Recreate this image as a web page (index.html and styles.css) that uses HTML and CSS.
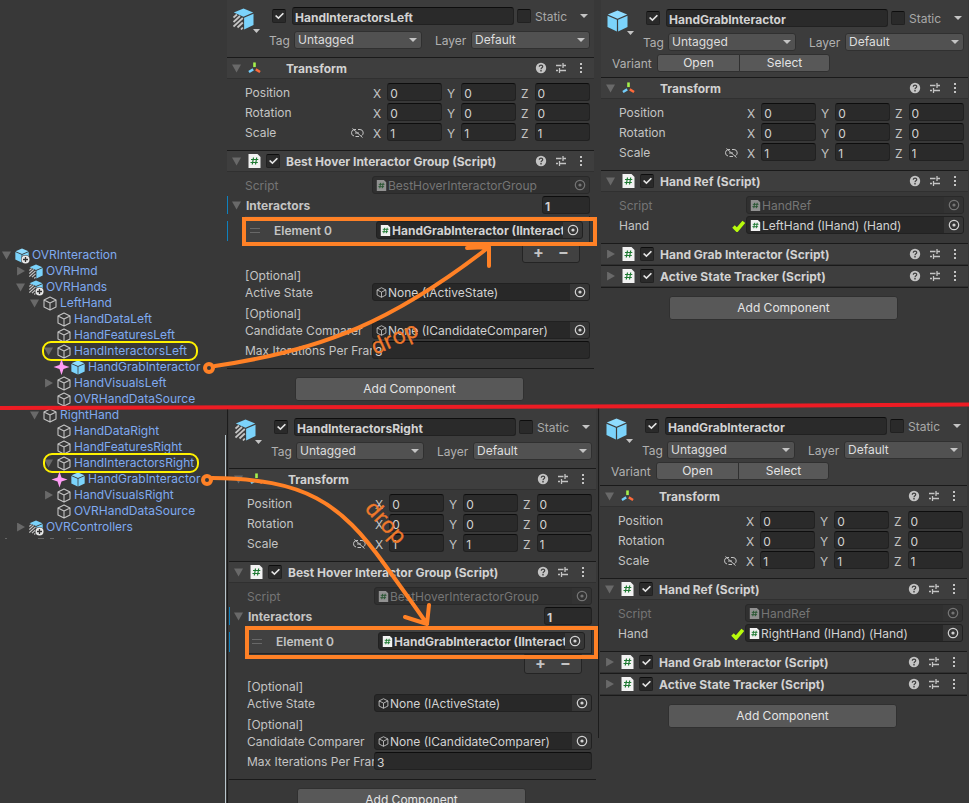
FILE: index.html
```html
<!DOCTYPE html>
<html lang="en">
<head>
<meta charset="utf-8">
<title>Interactor setup</title>
<link rel="stylesheet" href="styles.css">
</head>
<body>
<svg class="defs" aria-hidden="true">
  <symbol id="cube" viewBox="0 0 21 22"><path d="M10.500 0.500 20.200 4.500 10.500 8.700 0.800 4.500z" fill="#8fdcff"/><path d="M0.500 5.700 9.900 9.700V21.500L0.500 17z" fill="#7bd3fb"/><path d="M20.500 5.700 11.100 9.700V21.500L20.500 17z" fill="#7bd3fb"/></symbol>
  <symbol id="cube-variant" viewBox="0 0 21 22"><path d="M10.500 0.500 20.200 4.500 10.500 8.700 0.800 4.500z" fill="#7bd3fb"/><path d="M20.500 5.700 11.100 9.700V21.500L20.500 17z" fill="#7bd3fb"/><path d="M0.500 9.500 4 6.500M0.500 14 7 8M0.500 18.500 9.800 10M4.500 19.500 9.800 14.500M8 21.500 9.800 19.500" stroke="#c4c4c4" stroke-width="1.800"/></symbol>
  <symbol id="cube-line" viewBox="0 0 14 15"><path d="M7 1 13 4V11L7 14 1 11V4zM1 4 7 7 13 4M7 7V14" fill="none" stroke="currentColor" stroke-width="1.100" stroke-linejoin="round"/></symbol>
  <symbol id="script" viewBox="0 0 12 14"><path d="M0 0H9L12 3V14H0z" fill="#f2f2f2"/><path d="M5 3.500 3.800 10.500M8.200 3.500 7 10.500M2.500 5.500H9.800M2 8.500H9.300" stroke="#1f7a33" stroke-width="1.200"/></symbol>
  <symbol id="axes" viewBox="0 0 14 14"><path d="M7 1V6" stroke="#a4f04c" stroke-width="2.800"/><path d="M5.600 8.500 1 11.300" stroke="#73cdfa" stroke-width="2.600"/><path d="M8.400 8.500 13 11.300" stroke="#ff6a3a" stroke-width="2.600"/></symbol>
  <symbol id="help" viewBox="0 0 12 12"><circle cx="6" cy="6" r="5.200" fill="#c4c4c4"/><path d="M4.300 4.800C4.300 2.600 7.800 2.700 7.700 4.700 7.700 5.800 6 5.900 6 7.200" fill="none" stroke="#3e3e3e" stroke-width="1.200"/><path d="M6 8V9.400" stroke="#3e3e3e" stroke-width="1.400"/></symbol>
  <symbol id="sliders" viewBox="0 0 12 12"><path d="M1 3.500H6.500M8 3.500H11M8 1V6M1 8.500H3M5 8.500H11M4.500 6V11" stroke="#c4c4c4" stroke-width="1.300"/></symbol>
  <symbol id="dots" viewBox="0 0 12 12"><path d="M5 1H7V3H5zM5 5H7V7H5zM5 9H7V11H5z" fill="#c4c4c4"/></symbol>
  <symbol id="target" viewBox="0 0 12 12"><circle cx="6" cy="6" r="4.700" fill="none" stroke="currentColor" stroke-width="1.200"/><circle cx="6" cy="6" r="1.600" fill="currentColor"/></symbol>
  <symbol id="unlink" viewBox="0 0 13 10"><path d="M5 1.500H4a3.300 3.300 0 0 0-1 6.500M7 1.500H9a3.300 3.300 0 0 1 1.500 6.200M4.500 8.500H8M4 5H8M1.500 .5 11.500 9.500" fill="none" stroke="#c4c4c4"/></symbol>
  <symbol id="plus-badge" viewBox="0 0 9 9"><circle cx="4.500" cy="4.500" r="4.500" fill="#383838"/><circle cx="4.500" cy="4.500" r="4" fill="#e8e8e8"/><path d="M4.500 2V7M2 4.500H7" stroke="#333" stroke-width="1.300"/></symbol>
  <symbol id="tick" viewBox="0 0 13 12"><path d="M1.500 6.500 5 10 11.800 1.800" fill="none" stroke="#b8fb0c" stroke-width="3.600"/></symbol>
</svg>

<div class="board">
  <nav class="tree" aria-label="Hierarchy">
    <ul>
      <li class="d0"><i class="fold open"></i><span class="ico"><svg><use href="#cube"/></svg><svg class="badge"><use href="#plus-badge"/></svg></span>OVRInteraction</li>
      <li class="d1"><i class="fold"></i><span class="ico"><svg><use href="#cube-variant"/></svg></span>OVRHmd</li>
      <li class="d1"><i class="fold open"></i><span class="ico"><svg><use href="#cube-variant"/></svg><svg class="badge"><use href="#plus-badge"/></svg></span>OVRHands</li>
      <li class="d2"><i class="fold open"></i><span class="ico"><svg><use href="#cube-line"/></svg></span>LeftHand</li>
      <li class="d3"><i class="fold none"></i><span class="ico"><svg><use href="#cube-line"/></svg></span>HandDataLeft</li>
      <li class="d3"><i class="fold none"></i><span class="ico"><svg><use href="#cube-line"/></svg></span>HandFeaturesLeft</li>
      <li class="d3"><i class="fold open"></i><span class="ico"><svg><use href="#cube-line"/></svg></span>HandInteractorsLeft</li>
      <li class="d4"><i class="fold none"></i><span class="ico"><svg><use href="#cube"/></svg></span>HandGrabInteractor</li>
      <li class="d3"><i class="fold"></i><span class="ico"><svg><use href="#cube-line"/></svg></span>HandVisualsLeft</li>
      <li class="d3"><i class="fold none"></i><span class="ico"><svg><use href="#cube-line"/></svg></span>OVRHandDataSource</li>
      <li class="d2"><i class="fold open"></i><span class="ico"><svg><use href="#cube-line"/></svg></span>RightHand</li>
      <li class="d3"><i class="fold none"></i><span class="ico"><svg><use href="#cube-line"/></svg></span>HandDataRight</li>
      <li class="d3"><i class="fold none"></i><span class="ico"><svg><use href="#cube-line"/></svg></span>HandFeaturesRight</li>
      <li class="d3"><i class="fold open"></i><span class="ico"><svg><use href="#cube-line"/></svg></span>HandInteractorsRight</li>
      <li class="d4"><i class="fold none"></i><span class="ico"><svg><use href="#cube"/></svg></span>HandGrabInteractor</li>
      <li class="d3"><i class="fold"></i><span class="ico"><svg><use href="#cube-line"/></svg></span>HandVisualsRight</li>
      <li class="d3"><i class="fold none"></i><span class="ico"><svg><use href="#cube-line"/></svg></span>OVRHandDataSource</li>
      <li class="d1"><i class="fold"></i><span class="ico"><svg><use href="#cube-variant"/></svg><svg class="badge"><use href="#plus-badge"/></svg></span>OVRControllers</li>
    </ul>
  </nav>

  <main class="inspectors">
    <div class="pair pair-left-hand">
      <section class="inspector group">
        <header class="object">
          <span class="object-icon"><svg><use href="#cube-variant"/></svg><i class="caret"></i></span>
          <div class="name-row"><input type="checkbox" checked aria-label="Active"><input class="name" type="text" value="HandInteractorsLeft" aria-label="Name"><label class="static"><input type="checkbox"><span>Static</span><i class="caret"></i></label></div>
          <div class="tag-row"><label for="tag1">Tag</label><span class="drop tag"><select id="tag1"><option>Untagged</option></select></span><label class="layer-label" for="layer1">Layer</label><span class="drop layer"><select id="layer1"><option>Default</option></select></span></div>
        </header>
        <section class="component">
          <h2><i class="fold open"></i><svg class="type"><use href="#axes"/></svg><span class="title">Transform</span><svg class="act"><use href="#help"/></svg><svg class="act"><use href="#sliders"/></svg><svg class="act"><use href="#dots"/></svg></h2>
          <div class="body">
            <div class="row"><span class="label">Position</span><div class="xyz"><label>X<input type="text" value="0"></label><label>Y<input type="text" value="0"></label><label>Z<input type="text" value="0"></label></div></div>
            <div class="row"><span class="label">Rotation</span><div class="xyz"><label>X<input type="text" value="0"></label><label>Y<input type="text" value="0"></label><label>Z<input type="text" value="0"></label></div></div>
            <div class="row"><span class="label">Scale<svg class="unlink"><use href="#unlink"/></svg></span><div class="xyz"><label>X<input type="text" value="1"></label><label>Y<input type="text" value="1"></label><label>Z<input type="text" value="1"></label></div></div>
          </div>
        </section>
        <section class="component">
          <h2><i class="fold open"></i><svg class="type"><use href="#script"/></svg><input type="checkbox" checked aria-label="Best Hover Interactor Group enabled"><span class="title">Best Hover Interactor Group (Script)</span><svg class="act"><use href="#help"/></svg><svg class="act"><use href="#sliders"/></svg><svg class="act"><use href="#dots"/></svg></h2>
          <div class="body">
            <div class="row disabled"><span class="label">Script</span><div class="ref"><svg class="mini"><use href="#script"/></svg><span>BestHoverInteractorGroup</span><button type="button" disabled aria-label="Pick script"><svg><use href="#target"/></svg></button></div></div>
            <div class="row array"><i class="fold open"></i><label class="label" for="size1">Interactors</label><input id="size1" class="size" type="text" value="1"></div>
            <div class="list">
              <div class="item"><i class="grip"></i><span class="item-label">Element 0</span><div class="ref"><svg class="mini"><use href="#script"/></svg><span>HandGrabInteractor (IInteractor)</span><button type="button" aria-label="Pick element"><svg><use href="#target"/></svg></button></div></div>
              <div class="list-tools"><button type="button">+</button><button type="button">−</button></div>
            </div>
            <div class="row note">[Optional]</div>
            <div class="row"><span class="label">Active State</span><div class="ref"><svg class="mini"><use href="#cube-line"/></svg><span>None (IActiveState)</span><button type="button" aria-label="Pick active state"><svg><use href="#target"/></svg></button></div></div>
            <div class="row note">[Optional]</div>
            <div class="row"><span class="label">Candidate Comparer</span><div class="ref"><svg class="mini"><use href="#cube-line"/></svg><span>None (ICandidateComparer)</span><button type="button" aria-label="Pick comparer"><svg><use href="#target"/></svg></button></div></div>
            <div class="row"><label class="label" for="iter1">Max Iterations Per Frame</label><input id="iter1" class="wide" type="text" value="3"></div>
          </div>
        </section>
        <footer><button type="button" class="add">Add Component</button></footer>
      </section>

      <section class="inspector grab">
        <header class="object">
          <span class="object-icon"><svg><use href="#cube"/></svg><i class="caret"></i></span>
          <div class="name-row"><input type="checkbox" checked aria-label="Active"><input class="name" type="text" value="HandGrabInteractor" aria-label="Name"><label class="static"><input type="checkbox"><span>Static</span><i class="caret"></i></label></div>
          <div class="tag-row"><label for="tag2">Tag</label><span class="drop tag"><select id="tag2"><option>Untagged</option></select></span><label class="layer-label" for="layer2">Layer</label><span class="drop layer"><select id="layer2"><option>Default</option></select></span></div>
          <div class="variant-row"><span>Variant</span><button type="button">Open</button><button type="button">Select</button></div>
        </header>
        <section class="component">
          <h2><i class="fold open"></i><svg class="type"><use href="#axes"/></svg><span class="title">Transform</span><svg class="act"><use href="#help"/></svg><svg class="act"><use href="#sliders"/></svg><svg class="act"><use href="#dots"/></svg></h2>
          <div class="body">
            <div class="row"><span class="label">Position</span><div class="xyz"><label>X<input type="text" value="0"></label><label>Y<input type="text" value="0"></label><label>Z<input type="text" value="0"></label></div></div>
            <div class="row"><span class="label">Rotation</span><div class="xyz"><label>X<input type="text" value="0"></label><label>Y<input type="text" value="0"></label><label>Z<input type="text" value="0"></label></div></div>
            <div class="row"><span class="label">Scale<svg class="unlink"><use href="#unlink"/></svg></span><div class="xyz"><label>X<input type="text" value="1"></label><label>Y<input type="text" value="1"></label><label>Z<input type="text" value="1"></label></div></div>
          </div>
        </section>
        <section class="component">
          <h2><i class="fold open"></i><svg class="type"><use href="#script"/></svg><input type="checkbox" checked aria-label="Hand Ref enabled"><span class="title">Hand Ref (Script)</span><svg class="act"><use href="#help"/></svg><svg class="act"><use href="#sliders"/></svg><svg class="act"><use href="#dots"/></svg></h2>
          <div class="body">
            <div class="row disabled"><span class="label">Script</span><div class="ref"><svg class="mini"><use href="#script"/></svg><span>HandRef</span><button type="button" disabled aria-label="Pick script"><svg><use href="#target"/></svg></button></div></div>
            <div class="row"><span class="label">Hand<svg class="tick"><use href="#tick"/></svg></span><div class="ref"><svg class="mini"><use href="#script"/></svg><span>LeftHand (IHand) (Hand)</span><button type="button" aria-label="Pick hand"><svg><use href="#target"/></svg></button></div></div>
          </div>
        </section>
        <section class="component">
          <h2><i class="fold"></i><svg class="type"><use href="#script"/></svg><input type="checkbox" checked aria-label="Hand Grab Interactor enabled"><span class="title">Hand Grab Interactor (Script)</span><svg class="act"><use href="#help"/></svg><svg class="act"><use href="#sliders"/></svg><svg class="act"><use href="#dots"/></svg></h2>
        </section>
        <section class="component">
          <h2><i class="fold"></i><svg class="type"><use href="#script"/></svg><input type="checkbox" checked aria-label="Active State Tracker enabled"><span class="title">Active State Tracker (Script)</span><svg class="act"><use href="#help"/></svg><svg class="act"><use href="#sliders"/></svg><svg class="act"><use href="#dots"/></svg></h2>
        </section>
        <footer><button type="button" class="add">Add Component</button></footer>
      </section>
    </div>

    <div class="pair pair-right-hand">
      <section class="inspector group">
        <header class="object">
          <span class="object-icon"><svg><use href="#cube-variant"/></svg><i class="caret"></i></span>
          <div class="name-row"><input type="checkbox" checked aria-label="Active"><input class="name" type="text" value="HandInteractorsRight" aria-label="Name"><label class="static"><input type="checkbox"><span>Static</span><i class="caret"></i></label></div>
          <div class="tag-row"><label for="tag3">Tag</label><span class="drop tag"><select id="tag3"><option>Untagged</option></select></span><label class="layer-label" for="layer3">Layer</label><span class="drop layer"><select id="layer3"><option>Default</option></select></span></div>
        </header>
        <section class="component">
          <h2><i class="fold open"></i><svg class="type"><use href="#axes"/></svg><span class="title">Transform</span><svg class="act"><use href="#help"/></svg><svg class="act"><use href="#sliders"/></svg><svg class="act"><use href="#dots"/></svg></h2>
          <div class="body">
            <div class="row"><span class="label">Position</span><div class="xyz"><label>X<input type="text" value="0"></label><label>Y<input type="text" value="0"></label><label>Z<input type="text" value="0"></label></div></div>
            <div class="row"><span class="label">Rotation</span><div class="xyz"><label>X<input type="text" value="0"></label><label>Y<input type="text" value="0"></label><label>Z<input type="text" value="0"></label></div></div>
            <div class="row"><span class="label">Scale<svg class="unlink"><use href="#unlink"/></svg></span><div class="xyz"><label>X<input type="text" value="1"></label><label>Y<input type="text" value="1"></label><label>Z<input type="text" value="1"></label></div></div>
          </div>
        </section>
        <section class="component">
          <h2><i class="fold open"></i><svg class="type"><use href="#script"/></svg><input type="checkbox" checked aria-label="Best Hover Interactor Group enabled"><span class="title">Best Hover Interactor Group (Script)</span><svg class="act"><use href="#help"/></svg><svg class="act"><use href="#sliders"/></svg><svg class="act"><use href="#dots"/></svg></h2>
          <div class="body">
            <div class="row disabled"><span class="label">Script</span><div class="ref"><svg class="mini"><use href="#script"/></svg><span>BestHoverInteractorGroup</span><button type="button" disabled aria-label="Pick script"><svg><use href="#target"/></svg></button></div></div>
            <div class="row array"><i class="fold open"></i><label class="label" for="size2">Interactors</label><input id="size2" class="size" type="text" value="1"></div>
            <div class="list">
              <div class="item"><i class="grip"></i><span class="item-label">Element 0</span><div class="ref"><svg class="mini"><use href="#script"/></svg><span>HandGrabInteractor (IInteractor)</span><button type="button" aria-label="Pick element"><svg><use href="#target"/></svg></button></div></div>
              <div class="list-tools"><button type="button">+</button><button type="button">−</button></div>
            </div>
            <div class="row note">[Optional]</div>
            <div class="row"><span class="label">Active State</span><div class="ref"><svg class="mini"><use href="#cube-line"/></svg><span>None (IActiveState)</span><button type="button" aria-label="Pick active state"><svg><use href="#target"/></svg></button></div></div>
            <div class="row note">[Optional]</div>
            <div class="row"><span class="label">Candidate Comparer</span><div class="ref"><svg class="mini"><use href="#cube-line"/></svg><span>None (ICandidateComparer)</span><button type="button" aria-label="Pick comparer"><svg><use href="#target"/></svg></button></div></div>
            <div class="row"><label class="label" for="iter2">Max Iterations Per Frame</label><input id="iter2" class="wide" type="text" value="3"></div>
          </div>
        </section>
        <footer><button type="button" class="add">Add Component</button></footer>
      </section>

      <section class="inspector grab">
        <header class="object">
          <span class="object-icon"><svg><use href="#cube"/></svg><i class="caret"></i></span>
          <div class="name-row"><input type="checkbox" checked aria-label="Active"><input class="name" type="text" value="HandGrabInteractor" aria-label="Name"><label class="static"><input type="checkbox"><span>Static</span><i class="caret"></i></label></div>
          <div class="tag-row"><label for="tag4">Tag</label><span class="drop tag"><select id="tag4"><option>Untagged</option></select></span><label class="layer-label" for="layer4">Layer</label><span class="drop layer"><select id="layer4"><option>Default</option></select></span></div>
          <div class="variant-row"><span>Variant</span><button type="button">Open</button><button type="button">Select</button></div>
        </header>
        <section class="component">
          <h2><i class="fold open"></i><svg class="type"><use href="#axes"/></svg><span class="title">Transform</span><svg class="act"><use href="#help"/></svg><svg class="act"><use href="#sliders"/></svg><svg class="act"><use href="#dots"/></svg></h2>
          <div class="body">
            <div class="row"><span class="label">Position</span><div class="xyz"><label>X<input type="text" value="0"></label><label>Y<input type="text" value="0"></label><label>Z<input type="text" value="0"></label></div></div>
            <div class="row"><span class="label">Rotation</span><div class="xyz"><label>X<input type="text" value="0"></label><label>Y<input type="text" value="0"></label><label>Z<input type="text" value="0"></label></div></div>
            <div class="row"><span class="label">Scale<svg class="unlink"><use href="#unlink"/></svg></span><div class="xyz"><label>X<input type="text" value="1"></label><label>Y<input type="text" value="1"></label><label>Z<input type="text" value="1"></label></div></div>
          </div>
        </section>
        <section class="component">
          <h2><i class="fold open"></i><svg class="type"><use href="#script"/></svg><input type="checkbox" checked aria-label="Hand Ref enabled"><span class="title">Hand Ref (Script)</span><svg class="act"><use href="#help"/></svg><svg class="act"><use href="#sliders"/></svg><svg class="act"><use href="#dots"/></svg></h2>
          <div class="body">
            <div class="row disabled"><span class="label">Script</span><div class="ref"><svg class="mini"><use href="#script"/></svg><span>HandRef</span><button type="button" disabled aria-label="Pick script"><svg><use href="#target"/></svg></button></div></div>
            <div class="row"><span class="label">Hand<svg class="tick"><use href="#tick"/></svg></span><div class="ref"><svg class="mini"><use href="#script"/></svg><span>RightHand (IHand) (Hand)</span><button type="button" aria-label="Pick hand"><svg><use href="#target"/></svg></button></div></div>
          </div>
        </section>
        <section class="component">
          <h2><i class="fold"></i><svg class="type"><use href="#script"/></svg><input type="checkbox" checked aria-label="Hand Grab Interactor enabled"><span class="title">Hand Grab Interactor (Script)</span><svg class="act"><use href="#help"/></svg><svg class="act"><use href="#sliders"/></svg><svg class="act"><use href="#dots"/></svg></h2>
        </section>
        <section class="component">
          <h2><i class="fold"></i><svg class="type"><use href="#script"/></svg><input type="checkbox" checked aria-label="Active State Tracker enabled"><span class="title">Active State Tracker (Script)</span><svg class="act"><use href="#help"/></svg><svg class="act"><use href="#sliders"/></svg><svg class="act"><use href="#dots"/></svg></h2>
        </section>
        <footer><button type="button" class="add">Add Component</button></footer>
      </section>
    </div>
  </main>

  <!-- Hand-drawn notes laid over the panels -->
  <svg class="notes" viewBox="0 0 969 803" width="969" height="803">
    <path d="M225.500 435V803" stroke="#b9c6cc"/>
    <path d="M227.500 409V803M598.500 408V738" stroke="#1c1c1c"/>
    <path d="M5 538.500H7M38 538.500H44M50 538.500H54M68 538.500H71M76 538.500H83" stroke="#666"/>
    <path d="M0 408 400 407 720 406 969 404.500" fill="none" stroke="#ed1c24" stroke-width="4"/>
    <g fill="none" stroke="#fff200" stroke-width="2">
      <rect x="43" y="342" width="154" height="18" rx="8"/>
      <rect x="44" y="454" width="154" height="18" rx="8"/>
    </g>
    <g fill="#ff9cf5">
      <path d="M61.500 359 63.500 365 69.500 367 63.500 369 61.500 375 59.500 369 53.500 367 59.500 365z"/>
      <path d="M59.500 471.500 61.500 477.500 67.500 479.500 61.500 481.500 59.500 487.500 57.500 481.500 51.500 479.500 57.500 477.500z"/>
    </g>
    <g fill="none" stroke="#ff8126" stroke-width="4" stroke-linejoin="round" stroke-linecap="round">
      <circle cx="209" cy="368" r="4"/>
      <path d="M215 366C325 350 395 320 489 247M467 248 489 247 489 266"/>
      <circle cx="207" cy="480" r="4"/>
      <path d="M212 478C305 479 340 502 385 565 400 586 412 602 427 624M405 617 427 624 429 605"/>
    </g>
    <g fill="none" stroke="#ff8126" stroke-width="4">
      <rect x="244" y="219" width="351" height="25"/>
      <rect x="247" y="628" width="349" height="29"/>
    </g>
    <g class="drop-note">
      <text transform="translate(375 355) rotate(-24)">drop</text>
      <text transform="translate(364 509) rotate(48)">drop</text>
    </g>
  </svg>
</div>
</body>
</html>
```
FILE: styles.css
```css
* { box-sizing: border-box; }
body {
  margin: 0;
  background: #383838;
  color: #c4c4c4;
  font: 12px/16px Inter, "Liberation Sans", sans-serif;
}
input, select, button { font: inherit; color: inherit; margin: 0; }
svg { display: block; flex: none; }
.defs { display: none; }

.board {
  position: relative;
  display: flex;
  height: 100vh;
  overflow: hidden;
}

/* Hierarchy */
.tree { flex: 0 0 227px; padding-top: 247px; }
.tree ul { list-style: none; margin: 0; padding: 0; }
.tree li {
  display: flex;
  align-items: center;
  height: 16px;
  color: #7faaf0;
  white-space: nowrap;
}
.d0 { padding-left: 2px; }
.d1 { padding-left: 16px; }
.d2 { padding-left: 30px; }
.d3 { padding-left: 44px; }
.d4 { padding-left: 58px; }
.ico { position: relative; width: 14px; margin: 0 3px 0 4px; color: #c4c4c4; }
.ico svg { width: 14px; height: 15px; }
.ico .badge { position: absolute; left: 6px; top: 7px; width: 9px; height: 9px; }

.fold { flex: none; width: 9px; height: 9px; background: #696969; clip-path: polygon(12% 0, 100% 50%, 12% 100%); }
.fold.open { clip-path: polygon(0 12%, 100% 12%, 50% 100%); }
.fold.none { visibility: hidden; }
.caret { flex: none; width: 8px; height: 4px; background: #c4c4c4; clip-path: polygon(0 0, 100% 0, 50% 100%); }

/* Inspectors */
.inspectors { flex: 1; display: grid; grid-template-rows: 407px 1fr; min-width: 0; min-height: 0; }
.pair { display: flex; min-height: 0; overflow: hidden; }
.pair-left-hand { gap: 7px; padding-right: 1px; }
.pair-right-hand { gap: 4px; padding: 0 2px; }
.inspector { flex: 1 1 0; min-width: 0; }

.object {
  display: grid;
  grid-template-columns: 42px 1fr;
  row-gap: 3px;
  padding: 7px 4px 8px 0;
  background: #3c3c3c;
}
.grab .object { padding-bottom: 5px; padding-top: 9px; }
.pair-right-hand .object { padding-top: 11px; }
.pair-right-hand .grab .object { padding-top: 10px; }
.object-icon { grid-row: 1 / 3; padding: 1px 0 0 6px; }
.object-icon svg { width: 21px; height: 22px; }
.object-icon .caret { display: block; margin-left: 20px; margin-top: -1px; width: 7px; }
.name-row, .tag-row, .variant-row { display: flex; align-items: center; height: 18px; }
.name-row { padding-left: 3px; margin-bottom: 3px; }
.name { flex: 1; min-width: 0; margin: 0 3px 0 6px; font-weight: 700; }
.static { display: flex; align-items: center; width: 73px; color: #a8a8a8; }
.static span { flex: 1; padding: 2px 0 0 4px; }
.static .caret { margin-right: 2px; }
.tag-row label { width: 25px; padding-top: 2px; color: #b0b0b0; }
.tag-row .layer-label { width: 36px; margin-left: 13px; }
.drop { position: relative; height: 18px; }
.tag { flex: 128 1 0; }
.layer { flex: 119 1 0; }
.drop::after {
  content: "";
  position: absolute;
  right: 5px;
  top: 7px;
  width: 8px;
  height: 4px;
  background: #c4c4c4;
  clip-path: polygon(0 0, 100% 0, 50% 100%);
}
select {
  appearance: none;
  display: block;
  width: 100%;
  height: 18px;
  padding: 0 3px 1px;
  border: 1px solid #303030;
  border-radius: 3px;
  background: #515151;
  color: #dedede;
  line-height: 14px;
}
.variant-row { grid-column: 1 / -1; padding-left: 11px; color: #b0b0b0; }
.variant-row span { width: 45px; padding-top: 2px; }
.variant-row button, .add {
  height: 18px;
  padding: 0;
  border: 1px solid #303030;
  border-radius: 3px;
  background: #585858;
  color: #e4e4e4;
  line-height: 14px;
}
.variant-row button { width: 83px; border-radius: 3px 0 0 3px; }
.variant-row button + button { width: 91px; margin-left: -1px; border-radius: 0 3px 3px 0; }

input[type="text"] {
  height: 18px;
  padding: 2px 2px 0;
  border: 1px solid #212121;
  border-top-color: #0d0d0d;
  border-radius: 3px;
  background: #2a2a2a;
  color: #d2d2d2;
  line-height: 14px;
}
input[type="checkbox"] {
  appearance: none;
  position: relative;
  flex: none;
  width: 14px;
  height: 14px;
  border: 1px solid #212121;
  border-top-color: #0d0d0d;
  border-radius: 2px;
  background: #2a2a2a;
}
input[type="checkbox"]:checked::before {
  content: "";
  position: absolute;
  left: 2px;
  top: 2px;
  width: 9px;
  height: 8px;
  background: #e4e4e4;
  clip-path: polygon(0 50%, 14% 36%, 38% 62%, 86% 8%, 100% 22%, 38% 92%);
}

.component { border-top: 1px solid #1a1a1a; }
.component h2 {
  display: flex;
  align-items: center;
  height: 21px;
  margin: 0;
  padding: 0 7px 0 5px;
  border-bottom: 1px solid #303030;
  background: #3e3e3e;
  font-size: 12px;
  font-weight: 700;
  color: #d2d2d2;
}
.type { width: 13px; height: 14px; margin-left: 7px; }
h2 input { margin: 0 0 0 5px; }
h2 .title { flex: 1; margin-left: 6px; padding-top: 2px; white-space: nowrap; }
h2 .type + .title { margin-left: 25px; }
.act { width: 12px; height: 12px; margin-left: 8px; }

.body { padding: 4px 4px 9px 18px; }
.row { display: flex; align-items: center; height: 18px; margin-top: 2px; }
.row:first-child { margin-top: 0; }
.label {
  display: flex;
  flex: 0 0 127px;
  align-items: center;
  justify-content: space-between;
  padding-top: 2px;
  overflow: hidden;
  white-space: nowrap;
}
.unlink { width: 13px; height: 10px; margin-right: 8px; }
.tick { width: 13px; height: 12px; margin-right: 1px; }
.xyz { flex: 1; display: flex; gap: 5px; padding-left: 1px; }
.xyz label { flex: 1 1 0; display: flex; align-items: baseline; min-width: 0; height: 18px; }
.xyz input { flex: 1; width: 0; margin-left: 6px; }
.wide { flex: 1; min-width: 0; }
.disabled { color: #757575; }
.disabled .ref { background: #303030; border-color: #292929; color: #757575; }
.disabled .ref button { background: #333; }
.disabled .mini { opacity: 0.5; }
.ref {
  display: flex;
  flex: 1;
  align-items: center;
  min-width: 0;
  height: 18px;
  padding-left: 3px;
  border: 1px solid #212121;
  border-radius: 3px;
  background: #282828;
  color: #d2d2d2;
}
.ref span { flex: 1; margin-left: 1px; padding-top: 2px; overflow: hidden; white-space: nowrap; }
.mini { width: 11px; height: 11px; }
.ref button {
  flex: none;
  width: 19px;
  height: 16px;
  padding: 0 0 0 4px;
  border: 0;
  border-radius: 0 2px 2px 0;
  background: #363636;
}
.ref button svg { width: 12px; height: 12px; }
.array { margin-left: -18px; padding-left: 5px; border-left: 1px solid #0f81be; font-weight: 700; }
.array .fold { margin-left: -1px; }
.array .label { flex: 1; padding-left: 5px; }
.size { width: 48px; }
.item {
  display: flex;
  align-items: center;
  height: 27px;
  margin-top: 2px;
  padding: 2px 6px 0 5px;
  border: solid #242424;
  border-width: 0 1px 1px 0;
  background: #414141;
  font-weight: 700;
}
.list {
  margin-left: -18px;
  padding-left: 18px;
  background: linear-gradient(#0f81be, #0f81be) 0 100% / 1px 42px no-repeat;
  background-position: 0 5px;
  background-size: 1px 20px;
}
.grip { width: 10px; height: 5px; border: solid #686868; border-width: 1px 0; margin-right: 14px; }
.item-label { flex: 0 0 102px; padding-top: 2px; font-weight: 600; }
.list-tools {
  display: flex;
  width: 58px;
  height: 20px;
  margin: 0 10px 1px auto;
  padding: 0 3px 3px;
  border: 1px solid #242424;
  border-radius: 0 0 3px 3px;
  background: #414141;
}
.list-tools button {
  flex: 1;
  padding: 0;
  border: 0;
  background: none;
  font-size: 16px;
  font-weight: 700;
  line-height: 14px;
}
.note { align-items: flex-end; line-height: 14px; }
.note + .row { margin-top: 0; }

footer { padding: 8px 2px 0 0; border-top: 1px solid #1a1a1a; text-align: center; }
.add { width: 229px; height: 24px; }

/* Annotation layer */
.notes { position: absolute; left: 0; top: 0; pointer-events: none; }
.drop-note { fill: #f0792a; stroke: #f0792a; stroke-width: 0.4; font: 22px "Open Sans", sans-serif; }
```
